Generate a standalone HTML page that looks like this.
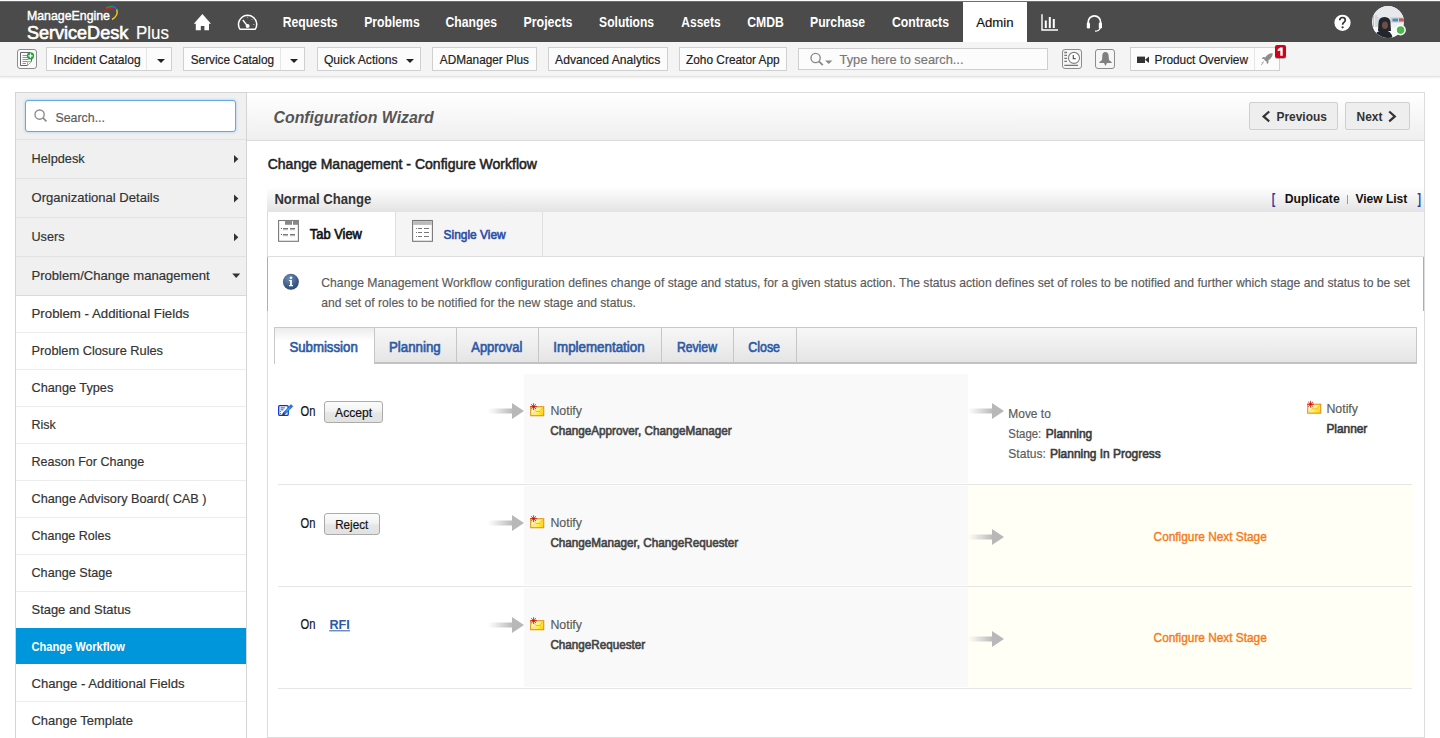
<!DOCTYPE html>
<html><head><meta charset="utf-8">
<style>
*{box-sizing:border-box;margin:0;padding:0}
html,body{width:1440px;height:738px;overflow:hidden;background:#fff;font-family:"Liberation Sans",sans-serif}
.a{position:absolute}
.ov{position:absolute;left:0;top:0}
.btn{position:absolute;height:24px;background:#fcfcfc;border:1px solid #d0d0d0}
.split{position:absolute;top:0;bottom:0;width:1px;background:#e6e6e6}
.grp{position:absolute;left:16px;width:230px;background:#f0f0f0;border-top:1px solid #e0e0e0}
.sep{position:absolute;left:16px;width:230px;height:1px;background:#ececec}
.ibox{position:absolute;width:20px;height:20px;border:1px solid #8c8c8c;border-radius:3px}
.tsep{position:absolute;top:328px;width:1px;height:35px;background:#c6c6c6}
.rsep{position:absolute;left:278px;width:1134px;height:1px;background:#e6e6e6}
.gblk{position:absolute;left:524px;width:444px;background:#f9f9f9}
.yblk{position:absolute;left:968px;width:445px;background:#fffff6}
.rbtn{position:absolute;height:22px;border:1px solid #ababab;border-radius:3px;background:linear-gradient(#fcfcfc,#f2f2f2 45%,#e6e6e6 55%,#e2e2e2)}

</style></head><body>
<!-- header -->
<div class="a" style="left:0;top:0;width:1440px;height:42px;background:linear-gradient(#fbfbfb 0,#fbfbfb 1px,#6e6f6e 1px,#6e6f6e 2px,#474847 2px,#474847 3px,#4a4b4a 3px)"></div>
<div class="a" style="left:963px;top:2px;width:64px;height:40px;background:#fff"></div>
<!-- toolbar -->
<div class="a" style="left:0;top:42px;width:1440px;height:35px;background:#f4f4f4;border-bottom:1px solid #e4e4e4;box-shadow:0 1px 2px rgba(0,0,0,.08)"></div>
<div class="btn" style="left:46px;top:47px;width:126px;height:24px"><div class="split" style="left:99px"></div></div>
<div class="btn" style="left:183px;top:47px;width:122px;height:24px"><div class="split" style="left:96px"></div></div>
<div class="btn" style="left:317px;top:47px;width:104px;height:24px"></div>
<div class="btn" style="left:432px;top:47px;width:105px;height:24px"></div>
<div class="btn" style="left:548px;top:47px;width:120px;height:24px"></div>
<div class="btn" style="left:679px;top:47px;width:108px;height:24px"></div>
<div class="btn" style="left:798px;top:48px;width:250px;height:22px;border-color:#cfcfcf"></div>
<div class="ibox" style="left:17px;top:49px;background:#fafafa"></div>
<div class="ibox" style="left:1062px;top:49px;height:20px;background:#f6f6f6"></div>
<div class="ibox" style="left:1095px;top:49px;height:20px;background:#f6f6f6"></div>
<div class="btn" style="left:1130px;top:47px;width:150px;height:24px"><div class="split" style="left:123px"></div></div>
<div class="a" style="left:1275px;top:45px;width:11px;height:13px;background:#d0021b;border-radius:2px;box-shadow:0 1px 1px rgba(0,0,0,.3)"></div>

<!-- sidebar -->
<div class="a" style="left:15px;top:92px;width:232px;height:660px;border:1px solid #d4d4d4;background:#fff"></div>
<div class="a" style="left:16px;top:93px;width:230px;height:202px;background:#f0f0f0"></div>
<div class="a" style="left:25px;top:100px;width:211px;height:32px;background:#fff;border:1px solid #66a8e6;border-radius:3px;box-shadow:0 0 3px rgba(102,168,230,.55)"></div>
<div class="sep" style="top:139px;background:#e2e2e2"></div>
<div class="sep" style="top:178px;background:#e2e2e2"></div>
<div class="sep" style="top:217px;background:#e2e2e2"></div>
<div class="sep" style="top:256px;background:#e2e2e2"></div>
<div class="sep" style="top:295px;background:#dadada"></div>
<div class="sep" style="top:332px"></div>
<div class="sep" style="top:369px"></div>
<div class="sep" style="top:406px"></div>
<div class="sep" style="top:443px"></div>
<div class="sep" style="top:480px"></div>
<div class="sep" style="top:517px"></div>
<div class="sep" style="top:554px"></div>
<div class="sep" style="top:591px"></div>
<div class="a" style="left:16px;top:628px;width:230px;height:36px;background:#0096db"></div>
<div class="sep" style="top:701px"></div>

<!-- wizard header -->
<div class="a" style="left:247px;top:92px;width:1178px;height:49px;border:1px solid #dcdcdc;border-left:0;background:linear-gradient(#ffffff,#efefef)"></div>
<div class="a" style="left:1249px;top:102px;width:89px;height:28px;background:#eeeeee;border:1px solid #cfcfcf;border-radius:2px"></div>
<div class="a" style="left:1345px;top:102px;width:65px;height:28px;background:#eeeeee;border:1px solid #cfcfcf;border-radius:2px"></div>

<!-- workflow container -->
<div class="a" style="left:267px;top:187px;width:1158px;height:551px;border:1px solid #dcdcdc;border-top:0"></div>
<div class="a" style="left:267px;top:187px;width:1157px;height:25px;background:linear-gradient(#ffffff,#e3e3e3)"></div>
<div class="a" style="left:268px;top:212px;width:1156px;height:45px;background:#f5f5f5;border-bottom:1px solid #dedede"></div>
<div class="a" style="left:268px;top:212px;width:128px;height:44px;background:#fff;border-right:1px solid #e0e0e0"></div>
<div class="a" style="left:396px;top:212px;width:147px;height:44px;border-right:1px solid #e0e0e0"></div>
<div class="a" style="left:267px;top:257px;width:1px;height:54px;background:#8db4e4"></div>
<div class="a" style="left:1423px;top:257px;width:1px;height:54px;background:#8db4e4"></div>

<div class="a" style="left:1424px;top:92px;width:1px;height:646px;background:#dcdcdc"></div>
<!-- stage tabs -->
<div class="a" style="left:274px;top:327px;width:1143px;height:37px;background:linear-gradient(#f7f7f7,#e5e5e5);border:1px solid #c9c9c9;border-bottom:2px solid #c2c2c2"></div>
<div class="a" style="left:275px;top:328px;width:99px;height:37px;background:linear-gradient(#ececec,#ffffff 35%,#ffffff)"></div>
<div class="tsep" style="left:374px"></div>
<div class="tsep" style="left:456px"></div>
<div class="tsep" style="left:538px"></div>
<div class="tsep" style="left:661px"></div>
<div class="tsep" style="left:733px"></div>
<div class="tsep" style="left:796px"></div>

<!-- rows -->
<div class="gblk" style="top:374px;height:109px"></div>
<div class="rsep" style="top:484px"></div>
<div class="gblk" style="top:486px;height:99px"></div>
<div class="yblk" style="top:485px;height:100px"></div>
<div class="rsep" style="top:586px"></div>
<div class="gblk" style="top:588px;height:99px"></div>
<div class="yblk" style="top:587px;height:100px"></div>
<div class="rsep" style="top:688px"></div>
<div class="rbtn" style="left:324px;top:401px;width:59px"></div>
<div class="rbtn" style="left:324px;top:513px;width:56px"></div>

<svg class="ov" width="1440" height="738" viewBox="0 0 1440 738" font-family="Liberation Sans, sans-serif">
<defs>
<linearGradient id="ag" x1="0" x2="1" y1="0" y2="0"><stop offset="0" stop-color="#bdbdbd" stop-opacity="0"/><stop offset="1" stop-color="#b8b8b8"/></linearGradient>
<linearGradient id="eg" x1="0" x2="1" y1="0" y2="0.6"><stop offset="0" stop-color="#ffffff"/><stop offset="0.4" stop-color="#fff7b0"/><stop offset="1" stop-color="#ffe100"/></linearGradient>
<radialGradient id="ig" cx="40%" cy="30%" r="70%"><stop offset="0" stop-color="#6f8db8"/><stop offset="1" stop-color="#2b4870"/></radialGradient>
<linearGradient id="pg" x1="0" x2="1" y1="1" y2="0"><stop offset="0" stop-color="#1a48d8"/><stop offset="0.5" stop-color="#28b4f0"/><stop offset="1" stop-color="#2256d6"/></linearGradient>


</defs>

<!-- logo arc -->
<path d="M104 11.5 Q108 7.5 113.5 8.5" stroke="#c8202a" stroke-width="1.5" fill="none"/>
<path d="M106 8 Q110 5.8 114 6.8" stroke="#2a9a3c" stroke-width="1.4" fill="none"/>
<path d="M112 6.2 Q116 7 116.8 10" stroke="#1e70c4" stroke-width="1.5" fill="none"/>
<path d="M116.8 9.5 Q118.5 16 112 19.5" stroke="#f0c419" stroke-width="1.5" fill="none"/>

<!-- home -->
<path d="M202.4 14 L193.8 23.8 H195.8 V30.2 H200.8 V26 H204.4 V30.2 H209 V23.8 H211 Z" fill="#fff"/>
<!-- gauge -->
<path d="M239.9 29.2 A9.1 9.1 0 1 1 255.3 29.2 Z" stroke="#fff" stroke-width="1.5" fill="none" stroke-linejoin="round"/>
<path d="M242.8 20 L247.5 26" stroke="#fff" stroke-width="1.3"/>
<circle cx="247.6" cy="26" r="2" fill="#fff"/>
<path d="M247.6 16.5 V18 M252.5 19 L251.5 20 M254.5 24.5 H253" stroke="#fff" stroke-width="0.8" opacity="0.6"/>
<!-- chart -->
<path d="M1042 14.2 V30 H1058" stroke="#fff" stroke-width="1.4" fill="none"/>
<rect x="1044.8" y="20.5" width="2" height="7.5" fill="#fff"/>
<rect x="1048.8" y="17" width="2" height="11" fill="#fff"/>
<rect x="1052.8" y="19" width="2" height="9" fill="#fff"/>
<!-- headset -->
<path d="M1088.2 25 V22 A6.2 6.2 0 0 1 1100.6 22 V25" stroke="#fff" stroke-width="1.7" fill="none"/>
<rect x="1086.8" y="22.5" width="3.2" height="6" rx="1.3" fill="#fff"/>
<rect x="1098.8" y="22.5" width="3.2" height="6" rx="1.3" fill="#fff"/>
<path d="M1100 28 Q1099.5 31 1095 31.2" stroke="#fff" stroke-width="1.3" fill="none"/>
<!-- help -->
<circle cx="1342.5" cy="22.8" r="8.1" fill="#fff"/>
<path d="M1339.8 20.3 Q1339.8 17.5 1342.5 17.5 Q1345.3 17.5 1345.3 20.1 Q1345.3 21.6 1343.8 22.4 Q1342.6 23.1 1342.6 24.8" stroke="#333" stroke-width="1.7" fill="none"/>
<circle cx="1342.6" cy="27.3" r="1.1" fill="#333"/>
<!-- avatar -->
<clipPath id="av"><circle cx="1388" cy="22" r="16"/></clipPath>
<g clip-path="url(#av)">
  <rect x="1372" y="6" width="32" height="32" fill="#eef0f3"/>
  <rect x="1372" y="6" width="32" height="12" fill="#e6e8ec"/>
  <path d="M1373.5 12 V30 M1376 15 V28 M1378 17 V27" stroke="#9aa1a8" stroke-width="0.6"/>
  <rect x="1390" y="17.2" width="14" height="5.5" fill="#cfd3d8"/>
  <rect x="1392.5" y="18.6" width="5.5" height="2.8" fill="#4a8db5"/>
  <rect x="1399" y="18.3" width="5" height="3.2" fill="#c35b5b"/>
  <rect x="1372" y="27" width="32" height="11" fill="#f6f7f9"/>
  <path d="M1378.5 23 Q1378.5 17 1384.5 17 Q1390.5 17 1390.5 23 L1391 31 H1378 Z" fill="#24262d"/>
  <ellipse cx="1385" cy="25.3" rx="3" ry="3.8" fill="#6c4f46"/>
  <path d="M1374 38 Q1375 30.5 1384 30 Q1391.5 30.5 1392.5 38 Z" fill="#23252d"/>
</g>
<circle cx="1400.6" cy="30.1" r="5.3" fill="#fff"/>
<circle cx="1400.6" cy="30.1" r="3.8" fill="#4ab84a"/>

<!-- new request icon -->
<path d="M20.5 52.5 H30 M20.5 52.5 V65.5 H27.5 L31.5 61.5 V56" stroke="#666" stroke-width="1" fill="none"/>
<path d="M22.5 55.5 H27 M22.5 57.5 H28.5 M22.5 59.5 H28.5 M22.5 61.5 H27 M22.5 63.5 H26" stroke="#888" stroke-width="0.9"/>
<path d="M27.5 65.5 L27.5 61.5 L31.5 61.5" stroke="#999" stroke-width="0.8" fill="#eee"/>
<circle cx="30.5" cy="55.8" r="3.6" fill="#16a334"/>
<path d="M30.5 53.6 V58 M28.3 55.8 H32.7" stroke="#fff" stroke-width="1.3"/>
<!-- carets -->
<path d="M157 59 H165 L161 63 Z" fill="#222"/>
<path d="M290 59 H298 L294 63 Z" fill="#222"/>
<path d="M406 59 H414 L410 63 Z" fill="#222"/>
<!-- search magnifier -->
<circle cx="815.6" cy="58" r="4.6" stroke="#8a8a8a" stroke-width="1.4" fill="none"/>
<path d="M818.9 61.3 L822.8 65.2" stroke="#8a8a8a" stroke-width="1.8"/>
<path d="M825 60.5 H832.5 L828.75 64 Z" fill="#8a8a8a"/>
<!-- history -->
<path d="M1064.3 52.5 H1067 M1064.3 55.4 H1067 M1064.3 58.4 H1067 M1064.3 61.4 H1067 M1064.3 65.3 H1078" stroke="#777" stroke-width="1.3"/>
<circle cx="1074" cy="57.9" r="5.5" stroke="#808080" stroke-width="1.1" fill="#fff"/>
<path d="M1073.3 55 V58.6 H1075.7" stroke="#555" stroke-width="1.2" fill="none"/>
<!-- bell -->
<path d="M1105.4 52 C1103 52 1102.4 54 1102.3 55.5 L1102 60 L1099.3 62.3 V62.9 H1111.7 V62.3 L1109 60 L1108.6 55.5 C1108.5 54 1107.8 52 1105.4 52 Z" fill="#808080"/>
<path d="M1104 63 L1105.5 66 L1107 63 Z" fill="#808080"/>
<!-- camera -->
<rect x="1137" y="56.6" width="8" height="6.4" fill="#333"/>
<path d="M1145 59.8 L1149 56.6 V63 Z" fill="#333"/>
<!-- rocket -->
<path d="M1272.6 53.3 C1270 52.8 1267.5 54.5 1265.5 57 L1263.8 59.3 L1266.3 61.8 L1268.6 60.2 C1271.2 58.1 1273 55.8 1272.6 53.3 Z" fill="#8c8c8c"/>
<path d="M1264.2 59 L1261.6 58.8 L1263.3 57 L1265.3 57.3 Z M1266.6 61.5 L1266.9 64.2 L1268.6 62.4 L1268.4 60.5 Z" fill="#8c8c8c"/>
<path d="M1261.5 63 L1264 61.5 M1261 65 L1263.5 62.8" stroke="#aaa" stroke-width="0.9"/>
<!-- sidebar search icon -->
<circle cx="39.6" cy="114.6" r="4.6" stroke="#8c8c8c" stroke-width="1.4" fill="none"/>
<path d="M42.9 117.9 L46.5 121.4" stroke="#8c8c8c" stroke-width="1.7"/>
<!-- sidebar arrows -->
<path d="M234 154.9 L238.4 158.9 L234 162.9 Z" fill="#333"/>
<path d="M234 194.4 L238.4 198.4 L234 202.4 Z" fill="#333"/>
<path d="M234 233.3 L238.4 237.3 L234 241.3 Z" fill="#333"/>
<path d="M232.2 273.5 H240.2 L236.2 278 Z" fill="#333"/>
<!-- prev/next chevrons -->
<path d="M1269.2 111.5 L1263.6 116.4 L1269.2 121.3" stroke="#333" stroke-width="2.2" fill="none"/>
<path d="M1389.2 111.5 L1394.8 116.4 L1389.2 121.3" stroke="#333" stroke-width="2.2" fill="none"/>
<!-- tab view icon -->
<rect x="278.6" y="220.5" width="19.8" height="20.8" fill="#fff" stroke="#777" stroke-width="1.1"/>
<rect x="285" y="220.3" width="7" height="4.5" fill="#888"/>
<rect x="293" y="220.3" width="6" height="4.5" fill="#888"/>
<path d="M283 228.5 H288 M290 228.5 H295 M283 234.5 H288 M290 234.5 H295" stroke="#777" stroke-width="1"/>
<path d="M283 229.7 H288 M290 229.7 H295 M283 235.7 H288 M290 235.7 H295" stroke="#bbb" stroke-width="1.2"/>
<circle cx="281.4" cy="228.4" r="0.6" fill="#666"/><circle cx="281.4" cy="234.4" r="0.6" fill="#666"/>
<!-- single view icon -->
<rect x="412.6" y="220.5" width="19.8" height="20.8" fill="#fff" stroke="#777" stroke-width="1.1"/>
<rect x="413.2" y="221.1" width="18.6" height="3.8" fill="#bbb"/>
<path d="M418 228.5 H422 M424 228.5 H429 M418 232.5 H422 M424 232.5 H429 M418 236.5 H422 M424 236.5 H429" stroke="#777" stroke-width="1"/>
<circle cx="416.5" cy="228.5" r="0.6" fill="#666"/><circle cx="416.5" cy="232.5" r="0.6" fill="#666"/><circle cx="416.5" cy="236.5" r="0.6" fill="#666"/>
<!-- info icon -->
<circle cx="290.9" cy="281.8" r="8" fill="url(#ig)"/>
<circle cx="291" cy="277.8" r="1.3" fill="#fff"/>
<path d="M289 280 H291.9 V285 H293 V286.2 H289 V285 H290.1 V281.1 H289 Z" fill="#fff"/>

<!-- edit icon -->
<rect x="278.7" y="405.6" width="9.5" height="9.8" rx="1.2" fill="#fff" stroke="#0a33cc" stroke-width="1.3"/>
<path d="M280.6 407.9 H284.8 M280.6 409.8 H283.4" stroke="#0a33cc" stroke-width="0.9"/>
<circle cx="280.7" cy="411.6" r="0.5" fill="#0a33cc"/><circle cx="280.7" cy="413.4" r="0.5" fill="#0a33cc"/>
<path d="M283 413 L291 404.6 L292.8 406.4 L284.6 414.6 Z" fill="url(#pg)" stroke="#1030b0" stroke-width="0.5"/>
<path d="M282.6 413.4 L283 413 L284.6 414.6 L282.2 415 Z" fill="#000"/>

<!-- workflow arrows & envelopes -->
<g transform="translate(488 403)"><rect x="0" y="5.5" width="25" height="5" fill="url(#ag)"/><path d="M24 0 L36 8 L24 16 Z" fill="#b8b8b8"/></g>
<g transform="translate(968 403)"><rect x="0" y="5.5" width="25" height="5" fill="url(#ag)"/><path d="M24 0 L36 8 L24 16 Z" fill="#b8b8b8"/></g>
<g transform="translate(488 515)"><rect x="0" y="5.5" width="25" height="5" fill="url(#ag)"/><path d="M24 0 L36 8 L24 16 Z" fill="#b8b8b8"/></g>
<g transform="translate(968 529)"><rect x="0" y="5.5" width="25" height="5" fill="url(#ag)"/><path d="M24 0 L36 8 L24 16 Z" fill="#b8b8b8"/></g>
<g transform="translate(488 617)"><rect x="0" y="5.5" width="25" height="5" fill="url(#ag)"/><path d="M24 0 L36 8 L24 16 Z" fill="#b8b8b8"/></g>
<g transform="translate(968 631)"><rect x="0" y="5.5" width="25" height="5" fill="url(#ag)"/><path d="M24 0 L36 8 L24 16 Z" fill="#b8b8b8"/></g>
<g transform="translate(528.5 402.5)">
  <rect x="2.2" y="4.2" width="13" height="9" fill="url(#eg)" stroke="#e0951a" stroke-width="1.1"/>
  <path d="M6 7.2 L7.5 9 H11.5 L14 5.5" stroke="#e6a52a" stroke-width="0.7" fill="none"/>
  <path d="M3 12.5 L6.5 9.5 M14.5 12.5 L11.5 9.5" stroke="#f0b848" stroke-width="0.5"/>
  <path d="M5.1 0.8 V7.6 M1.7 4.2 H8.5 M2.7 1.8 L7.5 6.6 M7.5 1.8 L2.7 6.6" stroke="#cc0a0a" stroke-width="0.85"/>
</g>
<g transform="translate(1305.5 400)">
  <rect x="2.2" y="4.2" width="13" height="9" fill="url(#eg)" stroke="#e0951a" stroke-width="1.1"/>
  <path d="M6 7.2 L7.5 9 H11.5 L14 5.5" stroke="#e6a52a" stroke-width="0.7" fill="none"/>
  <path d="M3 12.5 L6.5 9.5 M14.5 12.5 L11.5 9.5" stroke="#f0b848" stroke-width="0.5"/>
  <path d="M5.1 0.8 V7.6 M1.7 4.2 H8.5 M2.7 1.8 L7.5 6.6 M7.5 1.8 L2.7 6.6" stroke="#cc0a0a" stroke-width="0.85"/>
</g>
<g transform="translate(528.5 514.5)">
  <rect x="2.2" y="4.2" width="13" height="9" fill="url(#eg)" stroke="#e0951a" stroke-width="1.1"/>
  <path d="M6 7.2 L7.5 9 H11.5 L14 5.5" stroke="#e6a52a" stroke-width="0.7" fill="none"/>
  <path d="M3 12.5 L6.5 9.5 M14.5 12.5 L11.5 9.5" stroke="#f0b848" stroke-width="0.5"/>
  <path d="M5.1 0.8 V7.6 M1.7 4.2 H8.5 M2.7 1.8 L7.5 6.6 M7.5 1.8 L2.7 6.6" stroke="#cc0a0a" stroke-width="0.85"/>
</g>
<g transform="translate(528.5 616.5)">
  <rect x="2.2" y="4.2" width="13" height="9" fill="url(#eg)" stroke="#e0951a" stroke-width="1.1"/>
  <path d="M6 7.2 L7.5 9 H11.5 L14 5.5" stroke="#e6a52a" stroke-width="0.7" fill="none"/>
  <path d="M3 12.5 L6.5 9.5 M14.5 12.5 L11.5 9.5" stroke="#f0b848" stroke-width="0.5"/>
  <path d="M5.1 0.8 V7.6 M1.7 4.2 H8.5 M2.7 1.8 L7.5 6.6 M7.5 1.8 L2.7 6.6" stroke="#cc0a0a" stroke-width="0.85"/>
</g>
<!-- RFI underline -->
<rect x="329.2" y="630.3" width="20.8" height="1" fill="#2d5aa6"/>

<rect x="1347" y="195" width="1" height="9" fill="#9a9a9a"/>
<path d="M1280.2 47.6 H1282.7 V55.8 H1280.3 V50.4 L1277.7 51.3 V49.3 Z" fill="#fff"/>

<text x="26.90" y="19.80" font-size="12.4" fill="#fff" stroke="#fff" stroke-width="0.4" textLength="83.09" lengthAdjust="spacingAndGlyphs">ManageEngine</text>
<text x="26.90" y="39.20" font-size="17.5" fill="#fff" stroke="#fff" stroke-width="0.65" textLength="101.36" lengthAdjust="spacingAndGlyphs">ServiceDesk</text>
<text x="136.10" y="39.20" font-size="17.5" fill="#fff" stroke="#fff" stroke-width="0.18" textLength="32.81" lengthAdjust="spacingAndGlyphs">Plus</text>
<text x="282.70" y="26.90" font-size="14" fill="#fff" font-weight="700" textLength="54.79" lengthAdjust="spacingAndGlyphs">Requests</text>
<text x="364.20" y="26.90" font-size="14" fill="#fff" font-weight="700" textLength="55.50" lengthAdjust="spacingAndGlyphs">Problems</text>
<text x="445.60" y="26.90" font-size="14" fill="#fff" font-weight="700" textLength="51.30" lengthAdjust="spacingAndGlyphs">Changes</text>
<text x="523.50" y="26.90" font-size="14" fill="#fff" font-weight="700" textLength="48.90" lengthAdjust="spacingAndGlyphs">Projects</text>
<text x="599.10" y="26.90" font-size="14" fill="#fff" font-weight="700" textLength="55.00" lengthAdjust="spacingAndGlyphs">Solutions</text>
<text x="681.30" y="26.90" font-size="14" fill="#fff" font-weight="700" textLength="39.40" lengthAdjust="spacingAndGlyphs">Assets</text>
<text x="747.20" y="26.90" font-size="14" fill="#fff" font-weight="700" textLength="36.59" lengthAdjust="spacingAndGlyphs">CMDB</text>
<text x="810.00" y="26.90" font-size="14" fill="#fff" font-weight="700" textLength="55.01" lengthAdjust="spacingAndGlyphs">Purchase</text>
<text x="891.90" y="26.90" font-size="14" fill="#fff" font-weight="700" textLength="57.09" lengthAdjust="spacingAndGlyphs">Contracts</text>
<text x="976.20" y="27.20" font-size="13.3" fill="#111" stroke="#111" stroke-width="0.18" textLength="37.29" lengthAdjust="spacingAndGlyphs">Admin</text>
<text x="53.60" y="63.90" font-size="13" fill="#222" stroke="#222" stroke-width="0.18" textLength="87.00" lengthAdjust="spacingAndGlyphs">Incident Catalog</text>
<text x="190.70" y="63.90" font-size="13" fill="#222" stroke="#222" stroke-width="0.18" textLength="83.40" lengthAdjust="spacingAndGlyphs">Service Catalog</text>
<text x="323.90" y="63.90" font-size="13" fill="#222" stroke="#222" stroke-width="0.18" textLength="73.70" lengthAdjust="spacingAndGlyphs">Quick Actions</text>
<text x="439.80" y="63.90" font-size="13" fill="#222" stroke="#222" stroke-width="0.18" textLength="89.20" lengthAdjust="spacingAndGlyphs">ADManager Plus</text>
<text x="555.10" y="63.90" font-size="13" fill="#222" stroke="#222" stroke-width="0.18" textLength="105.10" lengthAdjust="spacingAndGlyphs">Advanced Analytics</text>
<text x="686.00" y="63.90" font-size="13" fill="#222" stroke="#222" stroke-width="0.18" textLength="93.70" lengthAdjust="spacingAndGlyphs">Zoho Creator App</text>
<text x="839.60" y="64.40" font-size="13.5" fill="#777" stroke="#777" stroke-width="0.18" textLength="123.90" lengthAdjust="spacingAndGlyphs">Type here to search...</text>
<text x="1154.60" y="63.80" font-size="13" fill="#222" stroke="#222" stroke-width="0.18" textLength="93.37" lengthAdjust="spacingAndGlyphs">Product Overview</text>
<text x="55.40" y="121.75" font-size="13" fill="#5c5c5c" stroke="#5c5c5c" stroke-width="0.18" textLength="49.60" lengthAdjust="spacingAndGlyphs">Search...</text>
<text x="31.50" y="163.20" font-size="13" fill="#333" stroke="#333" stroke-width="0.18" textLength="53.17" lengthAdjust="spacingAndGlyphs">Helpdesk</text>
<text x="31.50" y="202.20" font-size="13" fill="#333" stroke="#333" stroke-width="0.18" textLength="127.80" lengthAdjust="spacingAndGlyphs">Organizational Details</text>
<text x="31.50" y="241.20" font-size="13" fill="#333" stroke="#333" stroke-width="0.18" textLength="33.00" lengthAdjust="spacingAndGlyphs">Users</text>
<text x="31.50" y="280.20" font-size="13" fill="#333" stroke="#333" stroke-width="0.18" textLength="178.10" lengthAdjust="spacingAndGlyphs">Problem/Change management</text>
<text x="31.50" y="317.60" font-size="13" fill="#333" stroke="#333" stroke-width="0.18" textLength="157.70" lengthAdjust="spacingAndGlyphs">Problem - Additional Fields</text>
<text x="31.50" y="354.60" font-size="13" fill="#333" stroke="#333" stroke-width="0.18" textLength="131.50" lengthAdjust="spacingAndGlyphs">Problem Closure Rules</text>
<text x="31.50" y="391.60" font-size="13" fill="#333" stroke="#333" stroke-width="0.18" textLength="81.80" lengthAdjust="spacingAndGlyphs">Change Types</text>
<text x="31.50" y="428.60" font-size="13" fill="#333" stroke="#333" stroke-width="0.18" textLength="24.28" lengthAdjust="spacingAndGlyphs">Risk</text>
<text x="31.50" y="465.60" font-size="13" fill="#333" stroke="#333" stroke-width="0.18" textLength="112.81" lengthAdjust="spacingAndGlyphs">Reason For Change</text>
<text x="31.50" y="502.60" font-size="13" fill="#333" stroke="#333" stroke-width="0.18" textLength="175.00" lengthAdjust="spacingAndGlyphs">Change Advisory Board( CAB )</text>
<text x="31.50" y="539.60" font-size="13" fill="#333" stroke="#333" stroke-width="0.18" textLength="79.21" lengthAdjust="spacingAndGlyphs">Change Roles</text>
<text x="31.50" y="576.60" font-size="13" fill="#333" stroke="#333" stroke-width="0.18" textLength="80.70" lengthAdjust="spacingAndGlyphs">Change Stage</text>
<text x="31.50" y="613.60" font-size="13" fill="#333" stroke="#333" stroke-width="0.18" textLength="99.31" lengthAdjust="spacingAndGlyphs">Stage and Status</text>
<text x="31.50" y="650.60" font-size="13" fill="#fff" font-weight="700" textLength="93.38" lengthAdjust="spacingAndGlyphs">Change Workflow</text>
<text x="31.50" y="687.60" font-size="13" fill="#333" stroke="#333" stroke-width="0.18" textLength="153.00" lengthAdjust="spacingAndGlyphs">Change - Additional Fields</text>
<text x="31.50" y="724.60" font-size="13" fill="#333" stroke="#333" stroke-width="0.18" textLength="101.40" lengthAdjust="spacingAndGlyphs">Change Template</text>
<text x="273.50" y="122.50" font-size="17" fill="#555555" font-weight="700" font-style="italic" textLength="160.23" lengthAdjust="spacingAndGlyphs">Configuration Wizard</text>
<text x="1276.50" y="120.60" font-size="12.8" fill="#333" font-weight="700" textLength="50.40" lengthAdjust="spacingAndGlyphs">Previous</text>
<text x="1356.60" y="120.60" font-size="12.8" fill="#333" font-weight="700" textLength="25.89" lengthAdjust="spacingAndGlyphs">Next</text>
<text x="267.70" y="169.00" font-size="14" fill="#222" stroke="#222" stroke-width="0.52" textLength="269.26" lengthAdjust="spacingAndGlyphs">Change Management - Configure Workflow</text>
<text x="274.40" y="203.80" font-size="14" fill="#333" font-weight="700" textLength="96.90" lengthAdjust="spacingAndGlyphs">Normal Change</text>
<text x="1271.80" y="204.00" font-size="14" fill="#2a3f9f" font-weight="700" textLength="3.50" lengthAdjust="spacingAndGlyphs">[</text>
<text x="1284.80" y="202.50" font-size="12" fill="#111" font-weight="700" textLength="54.90" lengthAdjust="spacingAndGlyphs">Duplicate</text>
<text x="1355.40" y="202.50" font-size="12" fill="#111" font-weight="700" textLength="51.91" lengthAdjust="spacingAndGlyphs">View List</text>
<text x="1417.40" y="204.00" font-size="14" fill="#2a3f9f" font-weight="700" textLength="3.50" lengthAdjust="spacingAndGlyphs">]</text>
<text x="309.80" y="239.20" font-size="13.8" fill="#111" stroke="#111" stroke-width="0.65" textLength="52.07" lengthAdjust="spacingAndGlyphs">Tab View</text>
<text x="443.60" y="239.20" font-size="13.5" fill="#2c4ea8" stroke="#2c4ea8" stroke-width="0.65" textLength="62.07" lengthAdjust="spacingAndGlyphs">Single View</text>
<text x="321.30" y="287.30" font-size="13" fill="#5c5c5c" stroke="#5c5c5c" stroke-width="0.18" textLength="1088.71" lengthAdjust="spacingAndGlyphs">Change Management Workflow configuration defines change of stage and status, for a given status action. The status action defines set of roles to be notified and further which stage and status to be set</text>
<text x="321.30" y="307.00" font-size="13" fill="#5c5c5c" stroke="#5c5c5c" stroke-width="0.18" textLength="314.70" lengthAdjust="spacingAndGlyphs">and set of roles to be notified for the new stage and status.</text>
<text x="289.40" y="352.00" font-size="14" fill="#2d5aa6" stroke="#2d5aa6" stroke-width="0.65" textLength="68.35" lengthAdjust="spacingAndGlyphs">Submission</text>
<text x="389.00" y="351.50" font-size="14" fill="#2d5aa6" stroke="#2d5aa6" stroke-width="0.65" textLength="51.70" lengthAdjust="spacingAndGlyphs">Planning</text>
<text x="471.30" y="351.50" font-size="14" fill="#2d5aa6" stroke="#2d5aa6" stroke-width="0.65" textLength="51.00" lengthAdjust="spacingAndGlyphs">Approval</text>
<text x="553.30" y="351.50" font-size="14" fill="#2d5aa6" stroke="#2d5aa6" stroke-width="0.65" textLength="91.30" lengthAdjust="spacingAndGlyphs">Implementation</text>
<text x="676.90" y="351.50" font-size="14" fill="#2d5aa6" stroke="#2d5aa6" stroke-width="0.65" textLength="40.06" lengthAdjust="spacingAndGlyphs">Review</text>
<text x="748.30" y="351.50" font-size="14" fill="#2d5aa6" stroke="#2d5aa6" stroke-width="0.65" textLength="31.70" lengthAdjust="spacingAndGlyphs">Close</text>
<text x="300.60" y="415.80" font-size="14.2" fill="#111" stroke="#111" stroke-width="0.18" textLength="14.90" lengthAdjust="spacingAndGlyphs">On</text>
<text x="335.10" y="416.90" font-size="12.2" fill="#111" stroke="#111" stroke-width="0.18" textLength="37.00" lengthAdjust="spacingAndGlyphs">Accept</text>
<text x="550.40" y="415.40" font-size="13" fill="#5c5c5c" stroke="#5c5c5c" stroke-width="0.18" textLength="31.60" lengthAdjust="spacingAndGlyphs">Notify</text>
<text x="550.20" y="434.60" font-size="13" fill="#444" stroke="#444" stroke-width="0.65" textLength="181.50" lengthAdjust="spacingAndGlyphs">ChangeApprover, ChangeManager</text>
<text x="1008.30" y="417.80" font-size="13" fill="#5c5c5c" stroke="#5c5c5c" stroke-width="0.18" textLength="42.50" lengthAdjust="spacingAndGlyphs">Move to</text>
<text x="1008.30" y="437.80" font-size="13" fill="#5c5c5c" stroke="#5c5c5c" stroke-width="0.18" textLength="33.00" lengthAdjust="spacingAndGlyphs">Stage:</text>
<text x="1045.80" y="437.80" font-size="13" fill="#3c3c3c" stroke="#3c3c3c" stroke-width="0.65" textLength="46.40" lengthAdjust="spacingAndGlyphs">Planning</text>
<text x="1008.30" y="457.50" font-size="13" fill="#5c5c5c" stroke="#5c5c5c" stroke-width="0.18" textLength="37.50" lengthAdjust="spacingAndGlyphs">Status:</text>
<text x="1050.00" y="457.50" font-size="13" fill="#3c3c3c" stroke="#3c3c3c" stroke-width="0.65" textLength="110.80" lengthAdjust="spacingAndGlyphs">Planning In Progress</text>
<text x="1326.40" y="413.00" font-size="13" fill="#5c5c5c" stroke="#5c5c5c" stroke-width="0.18" textLength="31.60" lengthAdjust="spacingAndGlyphs">Notify</text>
<text x="1326.40" y="432.80" font-size="13" fill="#3c3c3c" stroke="#3c3c3c" stroke-width="0.65" textLength="40.90" lengthAdjust="spacingAndGlyphs">Planner</text>
<text x="300.60" y="527.90" font-size="14.2" fill="#111" stroke="#111" stroke-width="0.18" textLength="14.90" lengthAdjust="spacingAndGlyphs">On</text>
<text x="335.20" y="529.00" font-size="12.2" fill="#111" stroke="#111" stroke-width="0.18" textLength="33.11" lengthAdjust="spacingAndGlyphs">Reject</text>
<text x="550.40" y="526.80" font-size="13" fill="#5c5c5c" stroke="#5c5c5c" stroke-width="0.18" textLength="31.60" lengthAdjust="spacingAndGlyphs">Notify</text>
<text x="550.40" y="546.70" font-size="13" fill="#444" stroke="#444" stroke-width="0.65" textLength="187.80" lengthAdjust="spacingAndGlyphs">ChangeManager, ChangeRequester</text>
<text x="1153.60" y="540.70" font-size="13" fill="#f57a1a" stroke="#f57a1a" stroke-width="0.4" textLength="113.20" lengthAdjust="spacingAndGlyphs">Configure Next Stage</text>
<text x="300.60" y="629.00" font-size="14.2" fill="#111" stroke="#111" stroke-width="0.18" textLength="14.90" lengthAdjust="spacingAndGlyphs">On</text>
<text x="329.40" y="629.00" font-size="13.5" fill="#2d5aa6" font-weight="700" textLength="20.40" lengthAdjust="spacingAndGlyphs">RFI</text>
<text x="550.40" y="628.80" font-size="13" fill="#5c5c5c" stroke="#5c5c5c" stroke-width="0.18" textLength="31.60" lengthAdjust="spacingAndGlyphs">Notify</text>
<text x="550.40" y="648.70" font-size="13" fill="#444" stroke="#444" stroke-width="0.65" textLength="94.70" lengthAdjust="spacingAndGlyphs">ChangeRequester</text>
<text x="1153.60" y="642.00" font-size="13" fill="#f57a1a" stroke="#f57a1a" stroke-width="0.4" textLength="113.20" lengthAdjust="spacingAndGlyphs">Configure Next Stage</text>
</svg>
</body></html>
